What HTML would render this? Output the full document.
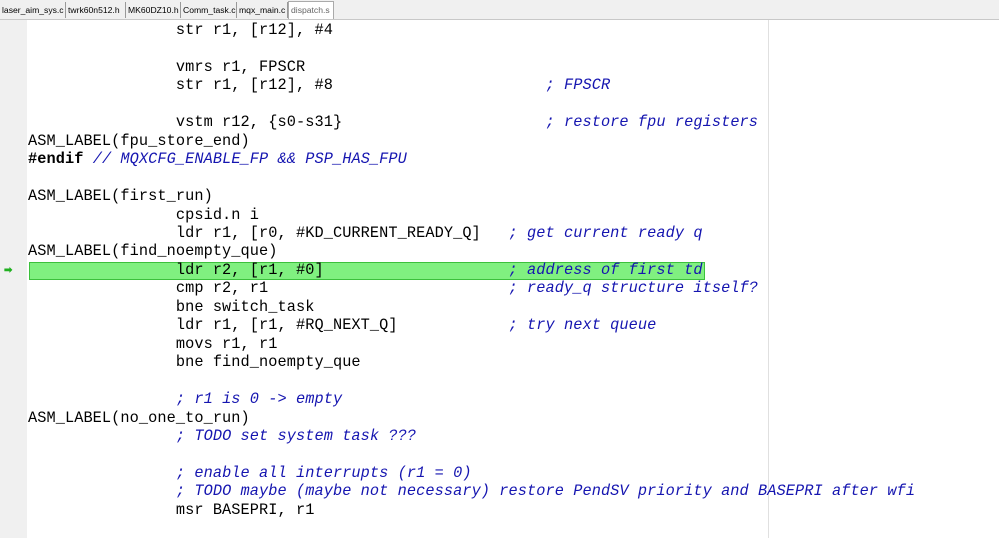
<!DOCTYPE html>
<html><head><style>
body{margin:0;width:999px;height:538px;overflow:hidden;background:#fff;position:relative;font-family:"Liberation Sans",sans-serif}
.tabs{position:absolute;left:0;top:0;width:999px;height:19px;background:#f0f0f0;border-bottom:1px solid #c8c8c8;font-size:8.6px}
.tab{position:absolute;top:2px;height:16px;line-height:16px;color:#000;border-right:1px solid #999;padding-left:2px;white-space:nowrap;overflow:hidden;box-sizing:border-box}
.gut{position:absolute;left:0;top:20px;width:27px;height:518px;background:#f0f0f0}
.margin{position:absolute;left:768px;top:20px;width:1px;height:518px;background:#e0e0e0}
.hl{position:absolute;left:29px;top:262px;width:676px;height:18px;background:#80f080;border:1px solid #3cc03c;box-sizing:border-box}
pre{position:absolute;left:28px;top:21px;margin:0;font-family:"Liberation Mono",monospace;font-size:15.28px;letter-spacing:0.08px;line-height:18.45px;color:#000}
i{color:#1515b0}
b{font-weight:bold}
.arrow{position:absolute;left:4px;top:265px;color:#20b020;font-size:10px;font-weight:bold}
</style></head><body>
<div class="tabs">
<div class="tab" style="left:0;width:66px">laser_aim_sys.c</div>
<div class="tab" style="left:66px;width:60px">twrk60n512.h</div>
<div class="tab" style="left:126px;width:55px">MK60DZ10.h</div>
<div class="tab" style="left:181px;width:56px">Comm_task.c</div>
<div class="tab" style="left:237px;width:51px">mqx_main.c</div>
<div class="tab" style="left:288px;top:1px;height:18px;width:46px;background:#fff;color:#666;border:1px solid #aaa;border-bottom:none">dispatch.s</div>
</div>
<div class="gut"></div>
<div class="margin"></div>
<div class="hl"></div>
<div class="arrow">➡</div>
<pre>                str r1, [r12], #4

                vmrs r1, FPSCR
                str r1, [r12], #8                       <i>; FPSCR</i>

                vstm r12, {s0-s31}                      <i>; restore fpu registers</i>
ASM_LABEL(fpu_store_end)
<b>#endif</b> <i>// MQXCFG_ENABLE_FP &amp;&amp; PSP_HAS_FPU</i>

ASM_LABEL(first_run)
                cpsid.n i
                ldr r1, [r0, #KD_CURRENT_READY_Q]   <i>; get current ready q</i>
ASM_LABEL(find_noempty_que)
                ldr r2, [r1, #0]                    <i>; address of first td</i>
                cmp r2, r1                          <i>; ready_q structure itself?</i>
                bne switch_task
                ldr r1, [r1, #RQ_NEXT_Q]            <i>; try next queue</i>
                movs r1, r1
                bne find_noempty_que

                <i>; r1 is 0 -&gt; empty</i>
ASM_LABEL(no_one_to_run)
                <i>; TODO set system task ???</i>

                <i>; enable all interrupts (r1 = 0)</i>
                <i>; TODO maybe (maybe not necessary) restore PendSV priority and BASEPRI after wfi</i>
                msr BASEPRI, r1</pre>
</body></html>
